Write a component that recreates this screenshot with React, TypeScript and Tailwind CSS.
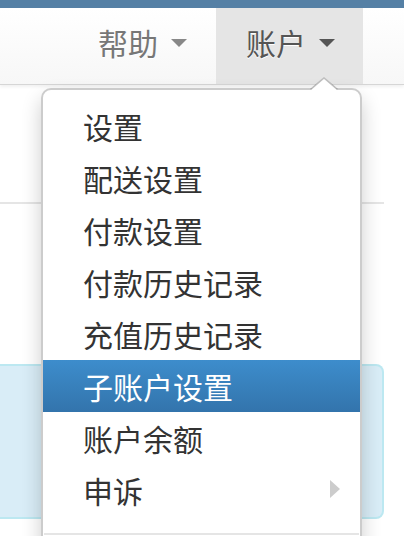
import React from 'react';

const menuItems = ['设置', '配送设置', '付款设置', '付款历史记录', '充值历史记录', '子账户设置', '账户余额', '申诉'];

const Caret = ({ color }: { color: string }) => (
  <span
    className={`ml-[13px] inline-block h-0 w-0 border-x-[8px] border-t-[8px] border-x-transparent ${color}`}
  />
);

const App = () => {
  const active = '子账户设置';

  return (
    <div className="relative h-[536px] w-[404px] overflow-hidden bg-white font-['Noto_Sans_CJK_SC','Noto_Sans',sans-serif]">
      <div className="h-2 bg-[#5580a5]" />

      <nav className="relative z-10 flex h-[77px] justify-end border-b border-[#d6d6d6] bg-gradient-to-b from-white to-[#f7f7f7] pr-[41px] shadow-[0_2px_3px_rgba(0,0,0,0.06)]">
        <div className="flex w-[148px] items-center pb-[7px] pl-[30px] text-[30px] text-[#777] [text-shadow:0_1px_0_#fff]">
          帮助
          <Caret color="border-t-[#888]" />
        </div>
        <div className="relative flex w-[147px] items-center bg-[#e5e5e5] pb-[7px] pl-[30px] text-[30px] text-[#555] [text-shadow:0_1px_0_#fff]">
          账户
          <Caret color="border-t-[#555]" />

          {/* dropdown */}
          <div className="absolute left-[-175px] top-[80px] w-[321px] rounded-[10px] border-2 border-black/20 bg-white pt-[10px] shadow-[0_10px_20px_rgba(0,0,0,0.2)] [text-shadow:none]">
            <svg
              className="absolute left-[267px] top-[-13px]"
              width="28"
              height="13"
              viewBox="0 0 28 13"
            >
              <polygon points="0,13 14,0 28,13" fill="#fff" />
              <polyline points="0.5,12.5 14,1 27.5,12.5" fill="none" stroke="rgba(0,0,0,0.25)" strokeWidth="1.6" />
            </svg>
            <ul>
              {menuItems.map((item) => (
                <li
                  key={item}
                  className={`relative flex h-[52px] items-center pb-[1px] pl-[40px] text-[30px] leading-[52px] ${
                    item === active
                      ? 'bg-gradient-to-b from-[#3d8dcc] to-[#3374ac] text-white'
                      : 'text-[#333]'
                  }`}
                >
                  {item}
                  {item === '申诉' && (
                    <span className="absolute left-[287px] top-[16px] h-0 w-0 border-y-[9px] border-l-[10px] border-y-transparent border-l-[#cccccc]" />
                  )}
                </li>
              ))}
            </ul>
            <div className="mx-px mt-[17px] h-[2px] bg-[#e5e5e5]" />
            <div className="h-[20px]" />
          </div>
        </div>
      </nav>

      <div className="pr-[20px]">
        <div className="mt-[117px] h-[2px] bg-[#e5e5e5]" />
        <div className="mt-[160px] h-[155px] rounded-r-[8px] border-2 border-l-0 border-[#bce8f1] bg-[#d9edf7]" />
      </div>
    </div>
  );
};

export default App;
